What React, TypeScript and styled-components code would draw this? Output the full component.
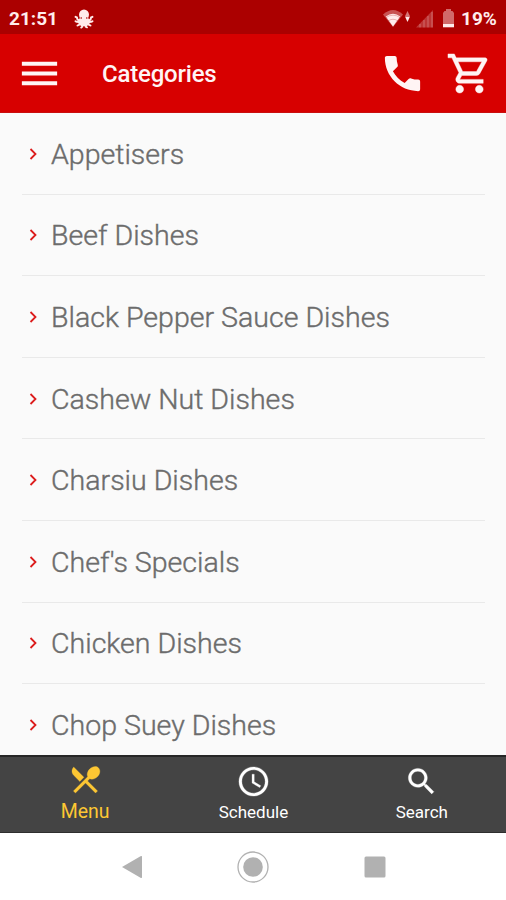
import React from 'react';
import styled, { createGlobalStyle } from 'styled-components';

const GlobalStyle = createGlobalStyle`
  * { box-sizing: border-box; }
  body { margin: 0; background: #fff; }
`;

const Screen = styled.div`
  width: 506px;
  height: 900px;
  display: flex;
  flex-direction: column;
  overflow: hidden;
  background: #fafafa;
  font-family: Roboto, "Liberation Sans", sans-serif;
`;

const StatusBar = styled.header`
  flex: 0 0 34px;
  display: flex;
  align-items: center;
  padding: 3px 8px 0 9px;
  background: #ab0000;
  color: #ffecec;
`;

const StatusText = styled.span<{ $width: number }>`
  width: ${(p) => p.$width}px;
  font-size: 19px;
  font-weight: 700;
  line-height: 31px;
  white-space: nowrap;
`;

const Spacer = styled.div<{ $size?: number }>`
  flex: ${(p) => (p.$size ? `0 0 ${p.$size}px` : '1')};
`;

const Icon = styled.svg<{ $w: number; $h?: number }>`
  display: block;
  flex: none;
  width: ${(p) => p.$w}px;
  height: ${(p) => p.$h ?? p.$w}px;
  fill: currentColor;
`;

const AppBar = styled.nav`
  flex: 0 0 79px;
  display: flex;
  align-items: center;
  padding: 0 13px 0 16px;
  background: #d70000;
  border-bottom: 1px solid #c90f0f;
  color: #fff4f4;
`;

const BarButton = styled.button`
  padding: 0;
  border: 0;
  background: none;
  color: inherit;
`;

const Title = styled.h1`
  flex: 1;
  margin: 2px 0 0 39px;
  font-size: 24px;
  font-weight: 500;
  line-height: 32px;
  letter-spacing: -0.2px;
`;

const List = styled.ul`
  flex: 1;
  min-height: 0;
  margin: 0;
  padding: 0 21px 0 22px;
  overflow: hidden;
  list-style: none;
`;

const Row = styled.li`
  height: 81.6px;
  display: flex;
  align-items: center;
  padding: 1px 0 0 7px;
  border-bottom: 1px solid #e9e9e9;
  color: #dc1c1c;
`;

const RowLabel = styled.span`
  margin-left: 14px;
  padding-top: 2px;
  color: #6c6c6c;
  font-size: 28.55px;
  font-weight: 300;
  line-height: 36px;
  white-space: nowrap;
  -webkit-text-stroke: 0.4px #6c6c6c;
`;

const TabBar = styled.nav`
  flex: 0 0 78px;
  display: grid;
  grid-template-columns: repeat(3, 1fr);
  padding-left: 1px;
  background: #444;
  border-top: 2px solid #262626;
  border-bottom: 1px solid #2e2e2e;
`;

const Tab = styled.div<{ $active?: boolean }>`
  display: flex;
  flex-direction: column;
  align-items: center;
  padding-top: ${(p) => (p.$active ? 5 : 7)}px;
  color: ${(p) => (p.$active ? '#fdc733' : '#fff')};
`;

const TabLabel = styled.span<{ $active?: boolean }>`
  margin-top: ${(p) => (p.$active ? 3 : 1)}px;
  font-size: ${(p) => (p.$active ? 19.5 : 17)}px;
  line-height: 24px;
`;

const SystemBar = styled.footer`
  flex: 0 0 67px;
  display: grid;
  grid-template-columns: repeat(3, 121.5px);
  justify-content: center;
  justify-items: center;
  align-items: center;
  background: #fff;
  color: #b1b1b1;
`;

const categories = [
  'Appetisers',
  'Beef Dishes',
  'Black Pepper Sauce Dishes',
  'Cashew Nut Dishes',
  'Charsiu Dishes',
  "Chef's Specials",
  'Chicken Dishes',
  'Chop Suey Dishes',
];

const tabs = [
  {
    label: 'Menu',
    active: true,
    path: 'M8.1 13.34l2.83-2.83L3.91 3.5c-1.56 1.56-1.56 4.09 0 5.66l4.19 4.18zm6.78-1.81c1.53.71 3.68.21 5.27-1.38 1.91-1.91 2.28-4.65.81-6.12-1.46-1.46-4.2-1.1-6.12.81-1.59 1.59-2.09 3.74-1.38 5.27L3.7 19.87l1.41 1.41L12 14.41l6.88 6.88 1.41-1.41L13.41 13l1.47-1.47z',
  },
  {
    label: 'Schedule',
    active: false,
    path: 'M11.99 2C6.47 2 2 6.48 2 12s4.47 10 9.99 10C17.52 22 22 17.52 22 12S17.52 2 11.99 2zM12 20c-4.42 0-8-3.58-8-8s3.58-8 8-8 8 3.58 8 8-3.58 8-8 8zm.5-13H11v6l5.25 3.15.75-1.23-4.5-2.67z',
  },
  {
    label: 'Search',
    active: false,
    path: 'M15.5 14h-.79l-.28-.27C15.41 12.59 16 11.11 16 9.5 16 5.91 13.09 3 9.5 3S3 5.91 3 9.5 5.91 16 9.5 16c1.61 0 3.09-.59 4.23-1.57l.27.28v.79l5 4.99L20.49 19l-4.99-5zm-6 0C7.01 14 5 11.99 5 9.5S7.01 5 9.5 5 14 7.01 14 9.5 11.99 14 9.5 14z',
  },
];

const Octopus = () => (
  <Icon $w={20} viewBox="0 0 20 20">
    <ellipse cx="10" cy="5.7" rx="5" ry="5.2" />
    <path d="M6 8h8l2 6-3 3H7l-3-3z" />
    <path
      d="M6 11C3.5 11.5 3 10 3 8.5M14 11c2.5.5 3-1 3-2.500M3 8.500L1.500 7.800M17 8.500l1.500-.7M7 13c-2.500 0-4 .5-5.500-.8M13 13c2.500 0 4 .5 5.500-.8M6.500 14.500c-.7 1.500-2 1.500-3 2M13.500 14.500c.7 1.500 2 1.500 3 2M9 15c0 1.800-.5 2.800-1.800 3.600M11 15c0 2 .5 3 2 3.400"
      fill="none"
      stroke="currentColor"
      strokeWidth="1.9"
      strokeLinecap="round"
    />
    <g fill="#ab0000">
      <circle cx="7.2" cy="9" r=".8" />
      <circle cx="12.8" cy="9" r=".8" />
    </g>
  </Icon>
);

const Wifi = () => (
  <Icon $w={28} $h={20} viewBox="0 0 28 20">
    <path d="M0 5.5Q10-3.5 20 5.5L10 18z" opacity=".35" />
    <path d="M2.8 7.5Q10 2 17.2 7.5L10 17.5z" />
    <path
      d="M2.5 8.8Q10 3.5 17.5 8.8M5 12Q10 8.5 15 12"
      fill="none"
      stroke="#ab0000"
      strokeWidth=".7"
      opacity=".35"
    />
    <path d="M24.5 2l2.4 5h-4.8z" opacity=".5" />
    <path d="M22 7.5h5l-2.5 5.5z" />
  </Icon>
);

const Signal = () => (
  <Icon $w={18} $h={18} viewBox="0 0 18 18">
    <path d="M17 0v17.5H0z" opacity=".22" />
    <path d="M4 14v3.5M8 10v7.5M12 6v11.5M16 2v15.5" stroke="currentColor" strokeWidth="1.2" opacity=".25" />
  </Icon>
);

const Battery = () => (
  <Icon $w={11} $h={19} viewBox="0 0 11 19">
    <path d="M3 0h5v2h1.5L11 4v11H0V4l1.5-2H3z" opacity=".45" />
    <path d="M0 15h11v3.3H0z" />
  </Icon>
);

export default function App() {
  return (
    <Screen>
      <GlobalStyle />
      <StatusBar>
        <StatusText $width={65}>21:51</StatusText>
        <Octopus />
        <Spacer />
        <Wifi />
        <Spacer $size={5} />
        <Signal />
        <Spacer $size={9} />
        <Battery />
        <Spacer $size={7} />
        <StatusText $width={37}>19%</StatusText>
      </StatusBar>

      <AppBar>
        <BarButton aria-label="Open navigation">
          <Icon $w={47} viewBox="0 0 24 24">
            <path d="M3 18h18v-2H3v2zm0-5h18v-2H3v2zm0-7v2h18V6H3z" />
          </Icon>
        </BarButton>
        <Title>Categories</Title>
        <BarButton aria-label="Call">
          <Icon $w={47} viewBox="0 0 24 24">
            <path d="M7.1 10.9c1.4 2.6 3.4 4.6 6 6l2-2.1c.4-.4.8-.5 1.300-.3 1.100.4 2.300.6 3.600.6.6 0 1 .4 1 1V20c0 .6-.4 1-1 1C10.600 21 3 13.400 3 4c0-.6.4-1 1-1h4c.6 0 1 .4 1 1 0 1.300.2 2.400.6 3.600.1.4 0 .8-.3 1.100z" />
          </Icon>
        </BarButton>
        <Spacer $size={20} />
        <BarButton aria-label="Cart">
          <Icon $w={47} viewBox="0 0 24 24" stroke="currentColor" strokeWidth=".2">
            <path d="M15.55 13c.75 0 1.41-.41 1.75-1.03l3.58-6.49c.37-.66-.11-1.48-.87-1.48H5.21l-.94-2H1v2h2l3.6 7.59-1.35 2.44C4.52 15.37 5.48 17 7 17h12v-2H7l1.1-2h7.45zM6.16 6h12.15l-2.76 5H8.53L6.16 6zM7 18c-1.1 0-1.99.9-1.99 2S5.9 22 7 22s2-.9 2-2-.9-2-2-2zm10 0c-1.1 0-1.99.9-1.99 2s.89 2 1.99 2 2-.9 2-2-.9-2-2-2z" />
          </Icon>
        </BarButton>
      </AppBar>

      <List>
        {categories.map((name) => (
          <Row key={name}>
            <Icon $w={8} $h={12} viewBox="0 0 8 12">
              <path d="M1.5 1l5 5-5 5" fill="none" stroke="currentColor" strokeWidth="1.8" />
            </Icon>
            <RowLabel>{name}</RowLabel>
          </Row>
        ))}
      </List>

      <TabBar>
        {tabs.map((tab) => (
          <Tab key={tab.label} $active={tab.active}>
            <Icon $w={35} viewBox="0 0 24 24" stroke="currentColor" strokeWidth=".2">
              <path d={tab.path} />
            </Icon>
            <TabLabel $active={tab.active}>{tab.label}</TabLabel>
          </Tab>
        ))}
      </TabBar>

      <SystemBar>
        <Icon $w={20} $h={22} viewBox="0 0 20 22">
          <path d="M0 11L18.5.2Q20-.5 20 1v20q0 1.5-1.5.8z" />
        </Icon>
        <Icon $w={32} viewBox="0 0 32 32">
          <circle cx="16" cy="16" r="15" fill="none" stroke="currentColor" strokeWidth="1.3" />
          <circle cx="16" cy="16" r="9.8" />
        </Icon>
        <Icon $w={22} viewBox="0 0 22 22">
          <rect x=".5" y=".5" width="21" height="21" rx="1.5" />
        </Icon>
      </SystemBar>
    </Screen>
  );
}
